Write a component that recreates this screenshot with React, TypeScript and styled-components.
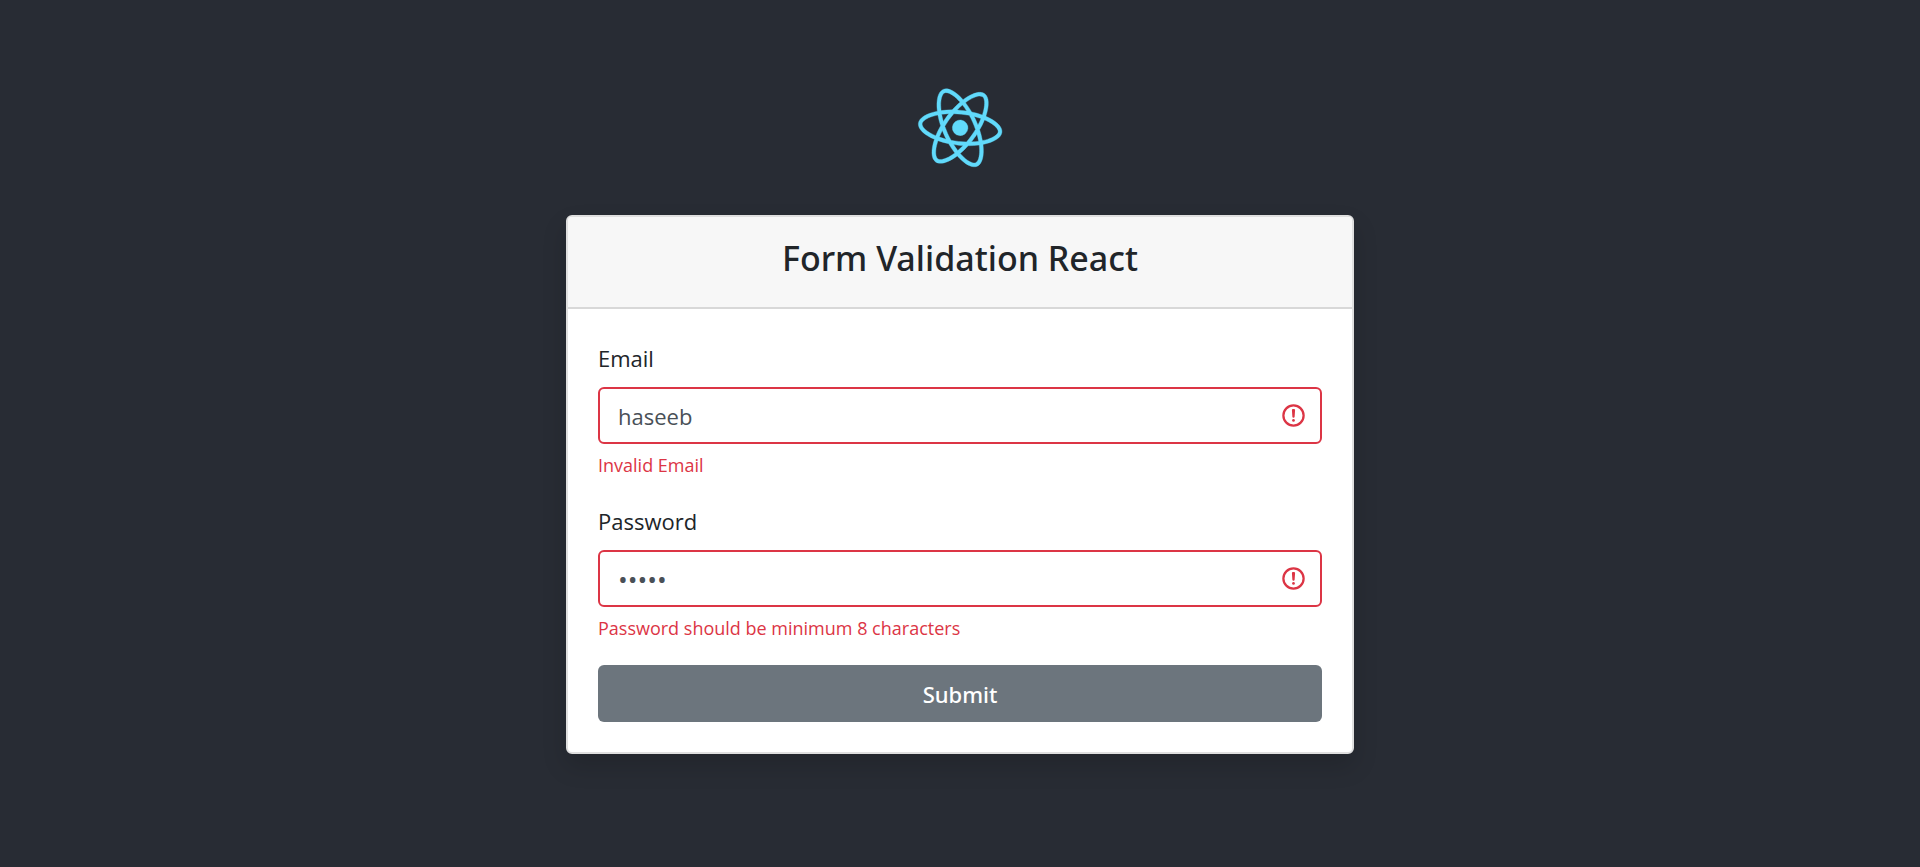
import React, { useState } from 'react';
import styled, { createGlobalStyle } from 'styled-components';

const GlobalStyle = createGlobalStyle`
  *, *::before, *::after { box-sizing: border-box; }
  body {
    margin: 0;
    background: #282c34;
    color: #212529;
    font-family: 'Open Sans', 'Noto Sans', sans-serif;
    font-size: 22px;
    line-height: 38px;
  }
`;

const Page = styled.main`
  min-height: 100vh;
  display: flex;
  flex-direction: column;
  align-items: center;
  gap: 36px;
  padding: 77px 0 60px;
`;

const Logo = styled.svg`
  display: block;
  height: 102px;
  transform: rotate(6deg);
`;

const Column = styled.div`
  width: calc(500% / 12);
  min-width: 480px;
  padding: 0 6px;
`;

const Card = styled.section`
  border: 2px solid #dfdfdf;
  border-radius: 6px;
  background: #fff;
  box-shadow: 0 12px 24px rgba(0, 0, 0, 0.15);
`;

const CardHeader = styled.header`
  padding: 20px 30px 28px;
  border-bottom: 2px solid #d8d8d8;
  border-radius: 4px 4px 0 0;
  background: #f7f7f7;
  text-align: center;
`;

const Title = styled.h1`
  margin: 0;
  font-family: 'Noto Sans', 'Open Sans', sans-serif;
  font-size: 34px;
  font-weight: 500;
  line-height: 42px;
`;

const Form = styled.form`
  padding: 30px;
`;

const Field = styled.div`
  margin-bottom: 24px;
`;

const Label = styled.label`
  display: block;
  margin-bottom: 10px;
`;

const Control = styled.div`
  position: relative;
`;

const Input = styled.input`
  display: block;
  width: 100%;
  height: 57px;
  padding: 1px 54px 0 18px;
  border: 2px solid #dc3545;
  border-radius: 6px;
  outline: none;
  background: #fff;
  color: #495057;
  font: inherit;
  font-size: ${({ type }) => (type === 'password' ? '26px' : '22px')};
`;

const ErrorMark = styled.svg`
  position: absolute;
  top: 15px;
  right: 15px;
  width: 27px;
  height: 27px;
  pointer-events: none;
`;

const Feedback = styled.p`
  margin: 8px 0 0;
  color: #dc3545;
  font-size: 18px;
  line-height: 26px;
`;

const SubmitButton = styled.button`
  display: block;
  width: 100%;
  height: 57px;
  padding: 1px 18px 0;
  border: 0;
  border-radius: 6px;
  background: #6c757d;
  color: #fff;
  font: inherit;
  font-family: 'Noto Sans', 'Open Sans', sans-serif;
  font-weight: 500;
  cursor: pointer;
`;

const ReactLogo = () => (
  <Logo viewBox="0 0 841.9 595.3" fill="#61dafb" stroke="#61dafb" strokeWidth="2" role="img" aria-label="React">
    <path d="M666.3 296.5c0-32.5-40.7-63.3-103.1-82.4 14.4-63.6 8-114.2-20.2-130.4-6.5-3.8-14.1-5.6-22.4-5.6v22.3c4.6 0 8.3.9 11.4 2.6 13.6 7.8 19.5 37.5 14.9 75.7-1.1 9.4-2.9 19.3-5.1 29.4-19.6-4.8-41-8.5-63.5-10.9-13.5-18.5-27.5-35.3-41.6-50 32.6-30.3 63.2-46.9 84-46.9V78c-27.5 0-63.5 19.6-99.9 53.6-36.4-33.8-72.4-53.2-99.9-53.2v22.3c20.7 0 51.4 16.5 84 46.6-14 14.7-28 31.4-41.3 49.9-22.6 2.4-44 6.1-63.6 11-2.3-10-4-19.7-5.2-29-4.7-38.2 1.1-67.9 14.6-75.8 3-1.8 6.9-2.6 11.5-2.6V78.5c-8.4 0-16 1.8-22.6 5.6-28.1 16.2-34.4 66.7-19.9 130.1-62.2 19.2-102.7 49.9-102.7 82.3 0 32.5 40.7 63.3 103.1 82.4-14.4 63.6-8 114.2 20.2 130.4 6.5 3.8 14.1 5.6 22.5 5.6 27.5 0 63.5-19.6 99.9-53.6 36.4 33.8 72.4 53.2 99.9 53.2 8.4 0 16-1.8 22.6-5.6 28.1-16.2 34.4-66.7 19.9-130.1 62-19.1 102.5-49.9 102.5-82.3zm-130.2-66.7c-3.7 12.9-8.3 26.2-13.5 39.5-4.1-8-8.4-16-13.1-24-4.6-8-9.5-15.8-14.4-23.4 14.2 2.1 27.9 4.7 41 7.9zm-45.8 106.5c-7.8 13.5-15.8 26.3-24.1 38.2-14.9 1.3-30 2-45.2 2-15.1 0-30.2-.7-45-1.9-8.3-11.9-16.4-24.6-24.2-38-7.6-13.1-14.5-26.4-20.8-39.8 6.2-13.4 13.2-26.8 20.7-39.9 7.8-13.5 15.8-26.3 24.1-38.2 14.9-1.3 30-2 45.2-2 15.1 0 30.2.7 45 1.9 8.3 11.9 16.4 24.6 24.2 38 7.6 13.1 14.5 26.4 20.8 39.8-6.3 13.4-13.2 26.8-20.7 39.9zm32.3-13c5.4 13.4 10 26.8 13.8 39.8-13.1 3.2-26.9 5.9-41.2 8 4.9-7.7 9.8-15.6 14.4-23.7 4.6-8 8.9-16.1 13-24.1zM421.2 430c-9.3-9.6-18.6-20.3-27.8-32 9 .4 18.2.7 27.5.7 9.4 0 18.7-.2 27.8-.7-9 11.7-18.3 22.4-27.5 32zm-74.4-58.9c-14.2-2.1-27.9-4.7-41-7.9 3.7-12.9 8.3-26.2 13.5-39.5 4.1 8 8.4 16 13.1 24 4.7 8 9.5 15.8 14.4 23.4zM420.7 163c9.3 9.6 18.6 20.3 27.8 32-9-.4-18.2-.7-27.5-.7-9.4 0-18.7.2-27.8.7 9-11.7 18.3-22.4 27.5-32zm-74 58.9c-4.9 7.7-9.8 15.6-14.4 23.7-4.6 8-8.9 16-13 24-5.4-13.4-10-26.8-13.8-39.8 13.1-3.1 26.9-5.8 41.2-7.9zm-90.5 125.2c-35.4-15.1-58.3-34.9-58.3-50.6 0-15.7 22.9-35.6 58.3-50.6 8.6-3.7 18-7 27.7-10.1 5.7 19.6 13.2 40 22.5 60.9-9.2 20.8-16.6 41.1-22.2 60.6-9.9-3.1-19.3-6.5-28-10.2zM310 490c-13.6-7.8-19.5-37.5-14.9-75.7 1.1-9.4 2.9-19.3 5.1-29.4 19.6 4.8 41 8.5 63.5 10.9 13.5 18.5 27.5 35.3 41.6 50-32.6 30.3-63.2 46.9-84 46.9-4.5-.1-8.3-1-11.3-2.7zm237.2-76.2c4.7 38.2-1.1 67.9-14.6 75.8-3 1.8-6.9 2.6-11.5 2.6-20.7 0-51.4-16.5-84-46.6 14-14.7 28-31.4 41.3-49.9 22.6-2.4 44-6.1 63.6-11 2.3 10.1 4.1 19.8 5.2 29.1zm38.5-66.7c-8.6 3.7-18 7-27.7 10.1-5.7-19.6-13.2-40-22.5-60.9 9.2-20.8 16.6-41.1 22.2-60.6 9.9 3.1 19.3 6.5 28.1 10.2 35.4 15.1 58.3 34.9 58.3 50.6-.1 15.7-23 35.6-58.4 50.6z" />
    <circle cx="420.9" cy="296.5" r="45.7" />
  </Logo>
);

interface FormFieldProps {
  id: string;
  label: string;
  type: string;
  initialValue: string;
  validate: (value: string) => string;
}

const FormField = ({ id, label, type, initialValue, validate }: FormFieldProps) => {
  const [value, setValue] = useState(initialValue);
  const error = validate(value);
  return (
    <Field>
      <Label htmlFor={id}>{label}</Label>
      <Control>
        <Input
          id={id}
          name={id}
          type={type}
          value={value}
          onChange={(event) => setValue(event.target.value)}
          aria-invalid={error !== ''}
          aria-describedby={`${id}-error`}
        />
        {error && (
          <ErrorMark viewBox="0 0 12 12" fill="none" stroke="#dc3545" aria-hidden="true">
            <circle cx="6" cy="6" r="4.5" />
            <path strokeLinejoin="round" d="M5.8 3.6h.4L6 6.5z" />
            <circle cx="6" cy="8.2" r=".6" fill="#dc3545" stroke="none" />
          </ErrorMark>
        )}
      </Control>
      <Feedback id={`${id}-error`}>{error}</Feedback>
    </Field>
  );
};

const validateEmail = (value: string) =>
  /^\S+@\S+\.\S+$/.test(value) ? '' : 'Invalid Email';

const validatePassword = (value: string) =>
  value.length >= 8 ? '' : 'Password should be minimum 8 characters';

export default function App() {
  return (
    <>
      <GlobalStyle />
      <Page>
        <ReactLogo />
        <Column>
          <Card>
            <CardHeader>
              <Title>Form Validation React</Title>
            </CardHeader>
            <Form noValidate onSubmit={(event) => event.preventDefault()}>
              <FormField id="email" label="Email" type="text" initialValue="haseeb" validate={validateEmail} />
              <FormField
                id="password"
                label="Password"
                type="password"
                initialValue="react"
                validate={validatePassword}
              />
              <SubmitButton type="submit">Submit</SubmitButton>
            </Form>
          </Card>
        </Column>
      </Page>
    </>
  );
}
